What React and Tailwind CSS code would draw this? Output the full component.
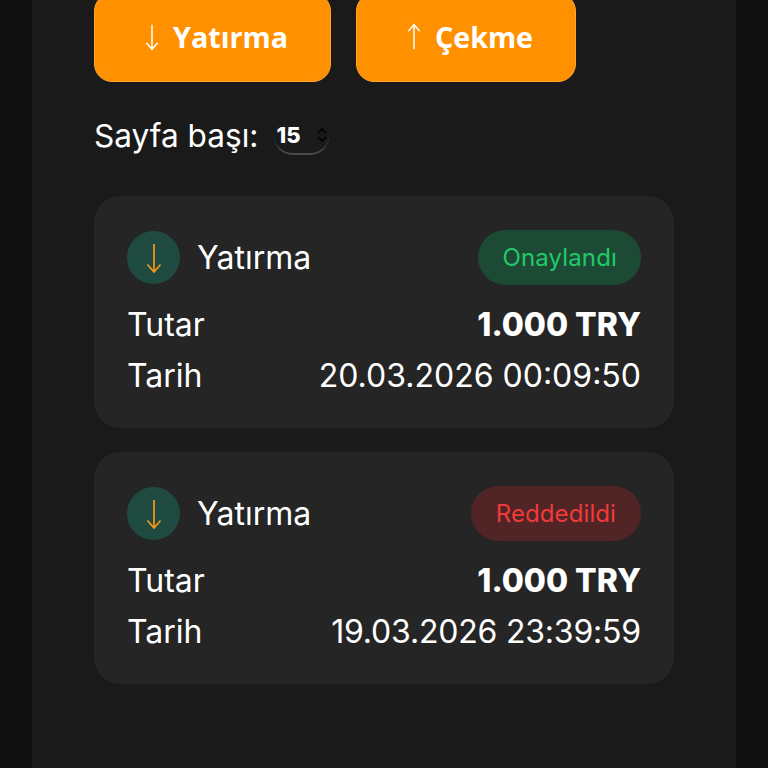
const ArrowDown = ({ className }) => (
  <svg viewBox="0 0 16 30" fill="none" stroke="currentColor" strokeWidth="1.7" className={className}>
    <path d="M8 1v28" />
    <path d="M1.5 21.5L8 29l6.5-7.5" />
  </svg>
);

const ArrowUp = ({ className }) => (
  <svg viewBox="0 0 16 30" fill="none" stroke="currentColor" strokeWidth="1.7" className={className}>
    <path d="M8 29V1" />
    <path d="M1.5 8.5L8 1l6.5 7.5" />
  </svg>
);

const transactions = [
  {
    status: "Onaylandı",
    badge: "bg-[#1d4a35] text-[#1fcb68] px-[24px] tracking-[0.15px]",
    amount: "1.000 TRY",
    date: "20.03.2026 00:09:50",
    dateClass: "",
  },
  {
    status: "Reddedildi",
    badge: "bg-[#512425] text-[#f03a3a] px-[25px] tracking-[0.1px]",
    amount: "1.000 TRY",
    date: "19.03.2026 23:39:59",
    dateClass: "tracking-[-0.2px]",
  },
];

const App = () => {
  return (
    <div className="h-[768px] overflow-hidden bg-[#0f0f0f] px-[32px] font-['Inter',sans-serif] text-white">
      <div className="-mt-[7px] h-[775px] bg-[#1a1a1a] px-[62px]">
        <div className="flex gap-[25px]">
          <button className="flex h-[89px] w-[237px] items-center justify-center gap-[14px] rounded-[18px] border border-[#ffa52e] bg-[#ff9100] pb-[2px] pl-[8px] font-['Open_Sans',sans-serif] text-[28.7px] font-bold">
            <ArrowDown className="h-[28px] w-[14px]" />
            Yatırma
          </button>
          <button className="flex h-[89px] w-[220px] items-center justify-center gap-[14px] rounded-[18px] border border-[#ffa52e] bg-[#ff9100] pb-[2px] pl-[8px] font-['Open_Sans',sans-serif] text-[28.7px] font-bold">
            <ArrowUp className="h-[28px] w-[14px]" />
            Çekme
          </button>
        </div>

        <div className="mt-[31px] flex h-[46px] items-center">
          <span className="text-[31.6px] leading-none">Sayfa başı:</span>
          <div className="relative ml-[16px] flex h-[38px] w-[55px] items-center rounded-[19px] border-b-2 border-[#4a4a4a]">
            <span className="ml-[2px] text-[22px] font-extrabold">15</span>
            <svg viewBox="0 0 12 20" fill="none" stroke="#050505" strokeWidth="2" className="absolute right-[1px] top-[8px] h-[20px] w-[12px]">
              <path d="M2 8l4-4 4 4" />
              <path d="M2 12l4 4 4-4" />
            </svg>
          </div>
        </div>

        <div className="mt-[37px] flex flex-col gap-[24px]">
          {transactions.map((t) => (
            <div key={t.date} className="h-[232px] rounded-[26px] bg-[#252525] px-[33px] pt-[34px]">
              <div className="flex items-center justify-between">
                <div className="flex items-center gap-[17px]">
                  <div className="flex h-[53px] w-[53px] items-center justify-center rounded-full bg-[#1f4a40] text-[#f59a14]">
                    <ArrowDown className="h-[30px] w-[16px]" />
                  </div>
                  <span className="text-[32px] leading-none">Yatırma</span>
                </div>
                <span className={`flex h-[55px] items-center rounded-full text-[24px] ${t.badge}`}>
                  {t.status}
                </span>
              </div>
              <div className="mt-[14px] flex h-[51px] items-center justify-between text-[32px] leading-none">
                <span>Tutar</span>
                <span className="font-extrabold">{t.amount}</span>
              </div>
              <div className="flex h-[51px] items-center justify-between text-[32px] leading-none">
                <span>Tarih</span>
                <span className={t.dateClass}>{t.date}</span>
              </div>
            </div>
          ))}
        </div>
      </div>
    </div>
  );
};

export default App;
